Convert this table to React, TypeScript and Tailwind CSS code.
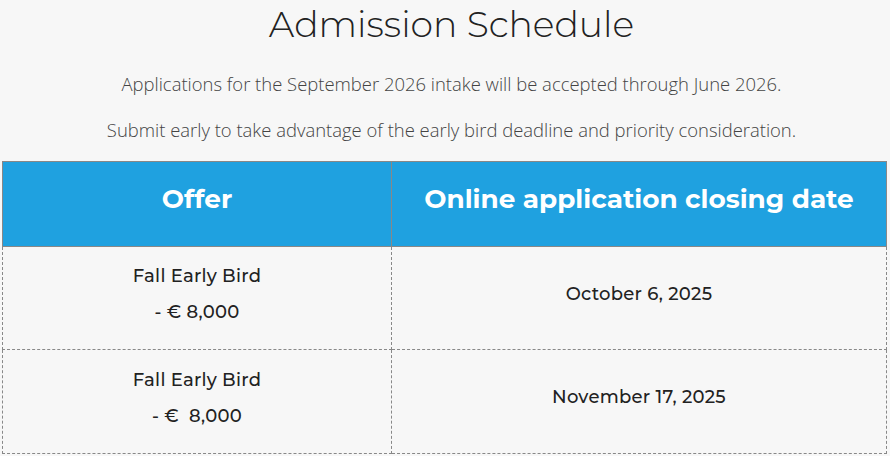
import React from "react";

const heading = { fontFamily: "Montserrat, 'Noto Sans', 'Open Sans', sans-serif" };

export default function App() {
  const rows = [
    { a: "- € 8,000", date: "October 6, 2025" },
    { a: "- €\u00a0 8,000", date: "November 17, 2025" },
  ];
  return (
    <div className="w-[890px] h-[456px] bg-[#f7f7f7] overflow-hidden">
      <div className="pl-[13px]">
        <h1
          className="text-center text-[36.2px] font-light leading-[46px] text-[#222] pt-[1px]"
          style={heading}
        >
          Admission Schedule
        </h1>
        <div
          className="text-center text-[18.45px] font-light text-[#444] leading-[24px] mt-[25px]"
          style={{ fontFamily: "'Open Sans', sans-serif" }}
        >
          <p>Applications for the September 2026 intake will be accepted through June 2026.</p>
          <p className="mt-[22px]">Submit early to take advantage of the early bird deadline and priority consideration.</p>
        </div>
      </div>
      <table className="ml-[2px] mt-[19px] w-[885px] border-collapse table-fixed" style={heading}>
        <colgroup>
          <col className="w-[389px]" />
          <col />
        </colgroup>
        <thead>
          <tr className="h-[85px] bg-[#1fa1e0]">
            <th className="border border-[#888] text-white text-[26.3px] font-bold text-center pb-[8px]">Offer</th>
            <th className="border border-[#888] text-white text-[26.3px] font-bold text-center pb-[8px]">
              Online application closing date
            </th>
          </tr>
        </thead>
        <tbody>
          {rows.map((r, i) => (
            <tr key={i} className={i === 0 ? "h-[103px]" : "h-[104px]"}>
              <td className="border border-dashed border-[#888] text-center text-[18px] font-medium tracking-[0.25px] text-[#222] pb-[8px]">
                <div className="leading-[22px]">Fall Early Bird</div>
                <div className="leading-[22px] mt-[14px]">{r.a}</div>
              </td>
              <td className="border border-dashed border-[#888] text-center text-[18px] font-medium tracking-[0.25px] text-[#222] pb-[8px]">
                {r.date}
              </td>
            </tr>
          ))}
        </tbody>
      </table>
    </div>
  );
}
